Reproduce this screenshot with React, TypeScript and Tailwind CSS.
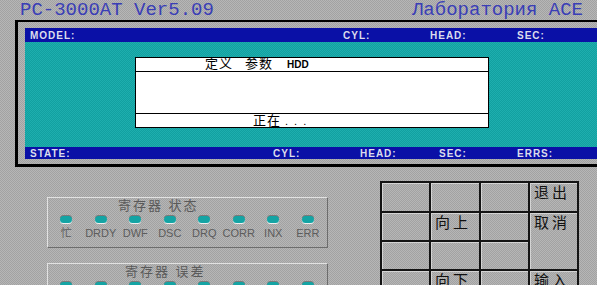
const dither = 'bg-[#acacac] bg-[repeating-conic-gradient(#b6b6b6_0_25%,#a2a2a2_0_50%)] bg-size-[2px_2px]';

const cjk = { fontFamily: '"Liberation Sans", "Noto Sans CJK SC", sans-serif' };

function Led() {
  return <div className="w-[12px] h-[7px] rounded-full bg-[#14a4a4] shadow-[0_1px_0_#f0f0f0,0_-1px_0_#7a7a7a]" />;
}

function RegisterBox({ title, titlePad, labels }: { title: string; titlePad: string; labels: string[] }) {
  return (
    <div className="w-[281px] h-[51px] shrink-0 border border-t-[#e2e2e2] border-l-[#e2e2e2] border-b-[#6c6c6c] border-r-[#6c6c6c]">
      <div className={`${titlePad} pt-[1px] text-[13px] leading-[14px] tracking-[2px] text-[#5a5a5a]`}>{title}</div>
      <div className="grid grid-cols-8 w-[276px] ml-[1px] mt-[3px]">
        {labels.map((l, i) => (
          <div key={i} className="flex flex-col items-center">
            <Led />
            <span className="mt-[4px] text-[11px] leading-[12px] text-[#5c5c5c]">{l}</span>
          </div>
        ))}
      </div>
    </div>
  );
}

function Key({ label, className = '' }: { label?: string; className?: string }) {
  return (
    <div className={`${dither} shadow-[inset_1px_1px_0_#d4d4d4] pl-[4px] pt-[2px] text-[15px] leading-[16px] tracking-[3px] text-[#111111] ${className}`}>
      {label}
    </div>
  );
}

export default function App() {
  const statusLabels = ['忙', 'DRDY', 'DWF', 'DSC', 'DRQ', 'CORR', 'INX', 'ERR'];
  const errLabels = ['', '', '', '', '', '', '', ''];

  return (
    <div className={`w-[597px] h-[285px] overflow-hidden flex flex-col ${dither}`} style={cjk}>
      <header
        className="h-[20px] flex justify-between items-start pl-[20px] pr-[14px] pt-[1px] text-[19px] leading-[19px] text-[#3a3eb6]"
        style={{ fontFamily: '"Liberation Mono", monospace' }}
      >
        <span>PC-3000AT Ver5.09</span>
        <span>Лаборатория ACE</span>
      </header>

      <div className="ml-[15px] w-[600px] shrink-0 border-l-[3px] border-t-2 border-b-[3px] border-black pl-[7px] pt-[6px] pb-[5px]">
        <div className="h-[14px] bg-[#0a10a6] flex items-center pl-[5px] text-[10px] font-bold tracking-[1px] text-[#dcdcec]">
          <span className="w-[313px]">MODEL:</span>
          <span className="w-[87px]">CYL:</span>
          <span className="w-[87px]">HEAD:</span>
          <span>SEC:</span>
        </div>

        <div className="h-[105px] bg-[#18a6a6] bg-[repeating-conic-gradient(#1eaeae_0_25%,#12a0a0_0_50%)] bg-size-[2px_2px] pl-[110px] pt-[15px]">
          <div className="w-[354px] h-[71px] border border-black bg-white flex flex-col text-black">
            <div className="h-[14px] border-b border-black flex items-end pl-[69px] pb-[1px]">
              <span className="text-[13px] leading-[13px] tracking-[1px]">定义</span>
              <span className="ml-[12px] text-[13px] leading-[13px] tracking-[1px]">参数</span>
              <span className="ml-[14px] text-[10px] leading-[11px] font-bold">HDD</span>
            </div>
            <div className="flex-1" />
            <div className="h-[14px] border-t border-black flex items-end pl-[117px]">
              <span className="text-[13px] leading-[13px] tracking-[1px]">正在</span>
              <span className="ml-[4px] text-[11px] leading-[11px] tracking-[6px]">...</span>
            </div>
          </div>
        </div>

        <div className="h-[12px] bg-[#0a10a6] flex items-center pl-[5px] text-[10px] font-bold tracking-[1px] text-[#dcdcec]">
          <span className="w-[243px]">STATE:</span>
          <span className="w-[87px]">CYL:</span>
          <span className="w-[79px]">HEAD:</span>
          <span className="w-[78px]">SEC:</span>
          <span>ERRS:</span>
        </div>
      </div>

      <div className="flex">
        <div className="pl-[47px] pt-[30px] flex flex-col gap-[15px]">
          <RegisterBox title="寄存器 状态" titlePad="pl-[70px]" labels={statusLabels} />
          <RegisterBox title="寄存器 误差" titlePad="pl-[77px]" labels={errLabels} />
        </div>

        <div className="ml-[52px] mt-[14px] self-start bg-[#141414] p-[2px] grid gap-[2px] grid-cols-[47px_48px_47px_47px] grid-rows-[28px_27px_27px_28px]">
          <Key />
          <Key />
          <Key />
          <Key label="退出" />
          <Key />
          <Key label="向上" />
          <Key />
          <Key label="取消" className="row-span-2" />
          <Key />
          <Key />
          <Key />
          <Key />
          <Key label="向下" />
          <Key />
          <Key label="输入" />
        </div>
      </div>
    </div>
  );
}
